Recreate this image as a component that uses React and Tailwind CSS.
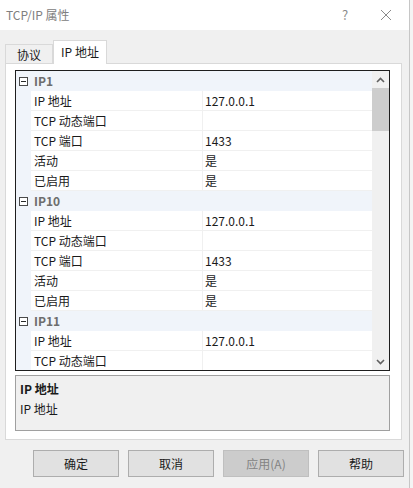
import React from "react";

const FONT = { fontFamily: '"Microsoft YaHei UI","Noto Sans CJK SC","Noto Sans",sans-serif' };

function Minus() {
  return (
    <div className="w-[9px] h-[9px] border border-[#4a4a4a] bg-white flex items-center justify-center">
      <div className="w-[5px] h-px bg-[#2a2a2a]" />
    </div>
  );
}

function Header({ label }) {
  return (
    <div className="flex h-[20px] shrink-0 bg-[#f0f4fa]">
      <div className="w-[15px] shrink-0 flex items-center pl-[3px]">
        <Minus />
      </div>
      <div className="flex-1 flex items-center pl-[3px] font-bold text-[#6d6d6d] text-[12px]">{label}</div>
    </div>
  );
}

function Prop({ name, value }) {
  return (
    <div className="flex h-[20px] shrink-0">
      <div className="w-[15px] shrink-0 bg-[#f0f4fa]" />
      <div className="w-[171px] shrink-0 flex items-center pl-[3px] text-[12px] text-[#1a1a1a] bg-white border-b border-[#f0f0f0]">{name}</div>
      <div className="w-px shrink-0 bg-[#f0f0f0]" />
      <div className="flex-1 flex items-center pl-[2px] text-[12px] text-[#1a1a1a] bg-white border-b border-[#f0f0f0]">{value}</div>
    </div>
  );
}

function Group({ label }) {
  return (
    <>
      <Header label={label} />
      <Prop name="IP 地址" value="127.0.0.1" />
      <Prop name="TCP 动态端口" value="" />
      <Prop name="TCP 端口" value="1433" />
      <Prop name="活动" value="是" />
      <Prop name="已启用" value="是" />
    </>
  );
}

export default function App() {
  return (
    <div className="w-[413px] h-[488px] bg-[#f4f4f4] flex overflow-hidden" style={FONT}>
      <div className="w-[410px] h-full shrink-0 border-r border-[#c6c6c6] bg-[#f0f0f0] flex flex-col">
        {/* title bar */}
        <div className="h-[30px] shrink-0 bg-white flex items-center">
          <div className="pl-[6px] text-[12px] text-[#808080] flex-1">TCP/IP 属性</div>
          <div className="w-[20px] text-[13px] text-[#8a8a8a] mr-[25px] text-center">?</div>
          <svg width="12" height="12" viewBox="0 0 12 12" className="mr-[17px]">
            <path d="M1 1 L11 11 M11 1 L1 11" stroke="#8a8a8a" strokeWidth="1" />
          </svg>
        </div>

        {/* tabs */}
        <div className="flex items-end h-[23px] mt-[10px] pl-[5px] relative z-10">
          <div className="w-[48px] h-[19px] border border-b-0 border-[#d9d9d9] bg-[#f0f0f0] flex items-center justify-center text-[12px] text-[#1a1a1a] pt-[1px]">协议</div>
          <div className="w-[54px] h-[24px] -mb-px border border-b-0 border-[#d9d9d9] bg-white flex items-center justify-center text-[12px] text-[#1a1a1a] pb-[1px]">IP 地址</div>
        </div>

        {/* panel */}
        <div className="ml-[5px] w-[397px] h-[377px] border border-[#d9d9d9] bg-white pl-[9px] pt-[6px] flex flex-col">
          <div className="w-[375px] h-[301px] border border-[#1e1e1e] flex overflow-hidden">
            <div className="flex-1 flex flex-col overflow-hidden">
              <Group label="IP1" />
              <Group label="IP10" />
              <Header label="IP11" />
              <Prop name="IP 地址" value="127.0.0.1" />
              <Prop name="TCP 动态端口" value="" />
            </div>
            <div className="w-[17px] shrink-0 bg-[#f0f0f0] flex flex-col">
              <div className="h-[17px] flex items-center justify-center">
                <svg width="9" height="6" viewBox="0 0 9 6">
                  <path d="M1 5 L4.5 1.5 L8 5" stroke="#606060" strokeWidth="1.6" fill="none" />
                </svg>
              </div>
              <div className="h-[43px] bg-[#cdcdcd]" />
              <div className="flex-1" />
              <div className="h-[17px] flex items-center justify-center">
                <svg width="9" height="6" viewBox="0 0 9 6">
                  <path d="M1 1 L4.5 4.5 L8 1" stroke="#606060" strokeWidth="1.6" fill="none" />
                </svg>
              </div>
            </div>
          </div>
          <div className="mt-[4px] w-[375px] h-[56px] border border-[#a0a0a0] bg-[#f0f0f0] px-[4px] pt-[3px] text-[12px] text-[#1a1a1a]">
            <div className="font-bold leading-[20px]">IP 地址</div>
            <div className="leading-[20px]">IP 地址</div>
          </div>
        </div>

        {/* buttons */}
        <div className="flex gap-[9px] pl-[33px] mt-[10px]">
          <button className="w-[86px] h-[27px] border border-[#adadad] bg-[#e1e1e1] text-[12px] text-[#1a1a1a]">确定</button>
          <button className="w-[86px] h-[27px] border border-[#adadad] bg-[#e1e1e1] text-[12px] text-[#1a1a1a]">取消</button>
          <button className="w-[86px] h-[27px] border border-[#bfbfbf] bg-[#cccccc] text-[12px] text-[#838383]">应用(A)</button>
          <button className="w-[86px] h-[27px] border border-[#adadad] bg-[#e1e1e1] text-[12px] text-[#1a1a1a]">帮助</button>
        </div>
      </div>
    </div>
  );
}
